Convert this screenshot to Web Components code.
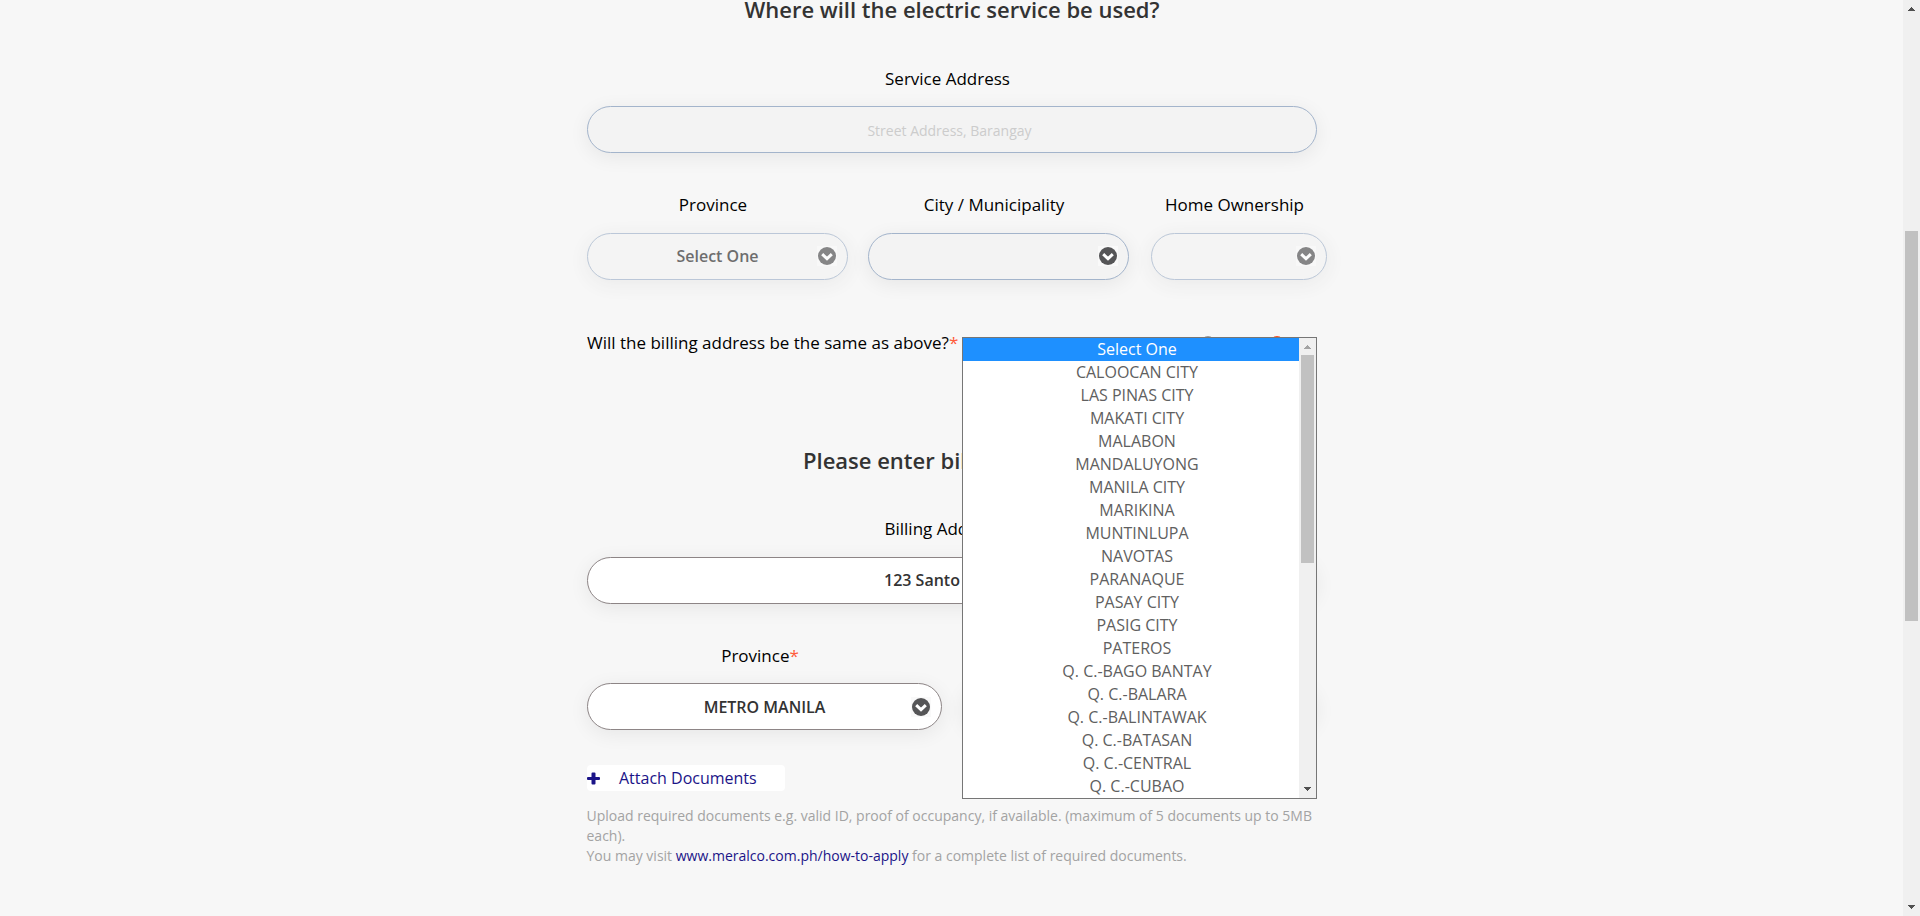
<!DOCTYPE html>
<html lang="en">
<head>
<meta charset="utf-8">
<title>Service application</title>
<style>
html,body{margin:0;height:100%;overflow:hidden}
body{background:#f7f7f7;font-family:"Open Sans","Noto Sans",sans-serif;color:#000}
</style>
</head>
<body>
<service-page></service-page>
<script>
const define = (name, html, setup) => customElements.define(name, class extends HTMLElement {
  constructor() {
    super();
    const t = document.createElement('template');
    t.innerHTML = html;
    this.attachShadow({mode: 'open'}).appendChild(t.content.cloneNode(true));
  }
  connectedCallback() { if (setup) setup(this, this.shadowRoot); }
});

define('form-title', `<style>
:host{display:block;height:30px;line-height:30px;font-size:22px;font-weight:600;color:#333;text-align:center;white-space:nowrap}
</style><slot></slot>`);

define('field-label', `<style>
:host{display:block;height:24px;line-height:25px;font-size:17px;text-align:center;white-space:nowrap;padding-right:9px}
span{color:#ff5b3a}
:host([optional]) span{display:none}
:host([start]){text-align:left}
</style><slot></slot><span>*</span>`);

define('pill-box', `<style>
:host{display:flex;align-items:center;justify-content:center;position:relative;box-sizing:border-box;height:47px;padding-bottom:1px;border:1px solid #8d8586;border-radius:24px;background:#fff;box-shadow:0 4px 20px rgba(0,0,0,.07);font-size:16px;font-weight:600;color:#333;white-space:nowrap}
:host([locked]){background:#f3f3f3;border-color:#a3b4cb}
:host([faded]){opacity:.7}
:host([low]){padding:1px 0 0}
:host([hint]){font-size:14px;font-weight:400;color:#ccc;padding:2px 5px 0 0}
svg{display:none;position:absolute;right:10px;top:12px}
:host([low]) svg{top:13px}
:host([menu]) svg{display:block}
</style><slot></slot>
<svg width="20" height="20" viewBox="0 0 20 20"><rect width="20" height="20" fill="#f9f9f9"/><circle cx="10" cy="10" r="9" fill="#555557"/><path d="M5.200 8.200 10 12.700l4.800-4.500" fill="none" stroke="#fff" stroke-width="3"/></svg>`);

define('scroll-bar', `<style>
:host{display:flex;flex-direction:column;align-items:center;width:17px;background:#f0f0f0}
i{width:13px;background:#c1c1c1;height:var(--thumb);margin-top:var(--gap)}
svg{display:block;flex:none}
b{flex:1}
</style>
<svg width="17" height="17" shape-rendering="crispEdges"><path d="M5 11h7v-1h-1v-1h-1v-1h-1v-1h-1v1h-1v1h-1v1h-1z" fill="var(--up,#505050)"/></svg>
<i></i><b></b>
<svg width="17" height="17" shape-rendering="crispEdges"><path d="M5 6h7v1h-1v1h-1v1h-1v1h-1v-1h-1v-1h-1v-1h-1z" fill="#505050"/></svg>`);

define('option-row', `<style>
:host{display:block;height:23px;line-height:22px;font-size:16px;color:#606060;text-align:center;padding-left:12px;white-space:nowrap}
:host([active]){background:#1e90ff;color:#fff}
</style><slot></slot>`);

define('option-list', `<style>
:host{display:flex;box-sizing:border-box;width:355px;height:462px;border:1px solid #767676;background:#fff}
div{flex:1}
scroll-bar{--up:#a3a3a3;--thumb:208px;--gap:0px}
</style><div></div><scroll-bar></scroll-bar>`, (el, root) => {
  const box = root.querySelector('div');
  ['Select One','CALOOCAN CITY','LAS PINAS CITY','MAKATI CITY','MALABON','MANDALUYONG','MANILA CITY','MARIKINA','MUNTINLUPA','NAVOTAS','PARANAQUE','PASAY CITY','PASIG CITY','PATEROS','Q. C.-BAGO BANTAY','Q. C.-BALARA','Q. C.-BALINTAWAK','Q. C.-BATASAN','Q. C.-CENTRAL','Q. C.-CUBAO'].forEach((name, i) => {
    const row = document.createElement('option-row');
    row.textContent = name;
    if (!i) row.setAttribute('active', '');
    box.append(row);
  });
});

define('radio-dot', `<style>
:host{display:block;box-sizing:border-box;width:16px;height:16px;border-radius:50%;border:1.5px solid var(--c,#999)}
</style>`);

define('attach-button', `<style>
:host{display:flex;align-items:center;width:198px;height:26px;border-radius:4px;background:#fff;color:#1b1488;font-size:16px;line-height:26px}
svg{width:13px;margin:0 19.500px 0 -0.500px}
</style><svg height="13" viewBox="0 0 13 13"><path d="M4.500 1.500q0-1 1-1h2q1 0 1 1V5h3.500q1 0 1 1v1q0 1-1 1H8.500v3.500q0 1-1 1h-2q-1 0-1-1V8H1q-1 0-1-1V6q0-1 1-1h3.500z" fill="#1b1488"/></svg><slot></slot>`);

define('service-page', `<style>
:host{display:flex;height:916px;overflow:hidden}
main{flex:1;min-width:0}
.form{width:730px;margin:-6px 0 0 587px;position:relative}
.row{display:grid}
.row.three{grid-template-columns:261px 261px 176px;column-gap:20px}
.row.three>:nth-child(3){margin-left:2px;box-sizing:border-box;width:176px}
.row.two{grid-template-columns:355px 355px;column-gap:20px}
.question{display:flex;margin-top:50px}
.question radio-dot{margin-top:6px}
option-list{position:absolute;left:375px;top:343px}
.help{margin:14.500px 0 0 -0.500px;font-size:14px;line-height:20px;color:#a3a3a3}
.help a{color:#1b1488}
.page-bar{--thumb:390px;--gap:214px}
</style>
<main><div class="form">
<form-title>Where will the electric service be used?</form-title>
<field-label optional style="margin-top:42px">Service Address</field-label>
<pill-box locked hint style="margin-top:16px">Street Address, Barangay</pill-box>
<div class="row three" style="margin-top:39px">
<field-label optional>Province</field-label><field-label optional>City / Municipality</field-label><field-label optional>Home Ownership</field-label>
</div>
<div class="row three" style="margin-top:17px">
<pill-box locked faded menu>Select One</pill-box><pill-box locked menu></pill-box><pill-box locked faded menu></pill-box>
</div>
<div class="question"><field-label start style="width:604px">Will the billing address be the same as above?</field-label><radio-dot></radio-dot><radio-dot style="--c:#ff4a1c;margin-left:53px"></radio-dot></div>
<form-title style="margin-top:91px;text-align:left;padding-left:216px">Please enter billing</form-title>
<field-label start style="margin-top:41px;padding-left:297.5px">Billing Address</field-label>
<pill-box style="margin-top:17px;justify-content:flex-start;padding-left:296px">123 Santo</pill-box>
<div class="row two" style="margin-top:39px"><field-label>Province</field-label></div>
<div class="row two" style="margin-top:16px"><pill-box menu low>METRO MANILA</pill-box><pill-box menu low></pill-box></div>
<attach-button style="margin-top:35px">Attach Documents</attach-button>
<p class="help">Upload required documents e.g. valid ID, proof of occupancy, if available. (maximum of 5 documents up to 5MB each).<br>You may visit <a>www.meralco.com.ph/how-to-apply</a> for a complete list of required documents.</p>
<option-list></option-list>
</div></main>
<scroll-bar class="page-bar"></scroll-bar>`);
</script>
</body>
</html>
